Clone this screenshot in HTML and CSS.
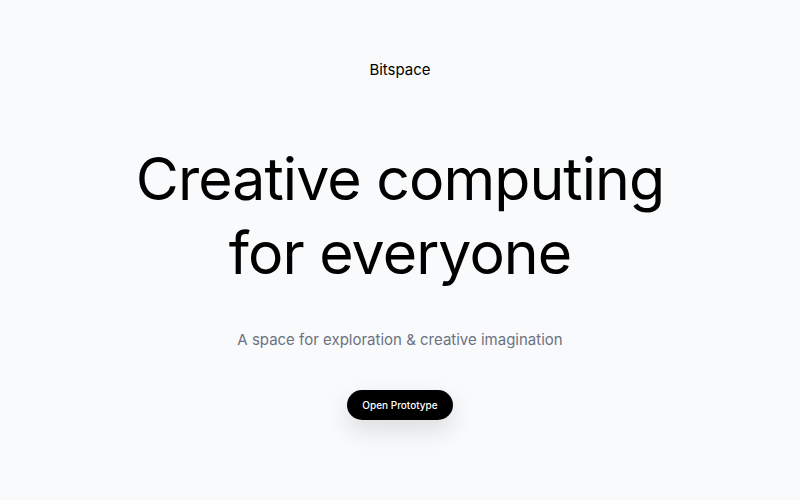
FILE: index.html
```html
<!DOCTYPE html>
<html>
<head>
<meta charset="utf-8">
<link rel="stylesheet" href="styles.css">
</head>
<body>
<main class="page">
  <header class="brand">Bitspace</header>
  <section class="hero">
    <h1 class="title">Creative computing<br>for everyone</h1>
    <p class="subtitle">A space for exploration &amp; creative imagination</p>
    <a class="cta" href="#">Open Prototype</a>
  </section>
</main>
</body>
</html>
```
FILE: styles.css
```css
html, body {
  margin: 0;
  padding: 0;
}
body {
  background: #f9fafb;
  font-family: Inter, "Noto Sans", sans-serif;
  color: #000;
  width: 800px;
  height: 500px;
  overflow: hidden;
}
.page {
  display: flex;
  flex-direction: column;
  align-items: center;
}
.brand {
  margin-top: 60px;
  font-size: 15px;
  line-height: 20px;
  font-weight: 400;
}
.hero {
  display: flex;
  flex-direction: column;
  align-items: center;
}
.title {
  margin: 62px 0 0;
  font-size: 59px;
  line-height: 74px;
  font-weight: 400;
  letter-spacing: -0.016em;
  text-align: center;
}
.subtitle {
  margin: 39px 0 0;
  font-size: 15px;
  line-height: 22px;
  color: #6b7280;
}
.cta {
  margin-top: 39px;
  display: inline-flex;
  align-items: center;
  height: 30px;
  padding: 0 15px;
  border-radius: 999px;
  background: #000;
  color: #fff;
  font-size: 10px;
  font-weight: 500;
  text-decoration: none;
  box-shadow: 0 10px 25px rgba(0,0,0,0.12);
}
```
